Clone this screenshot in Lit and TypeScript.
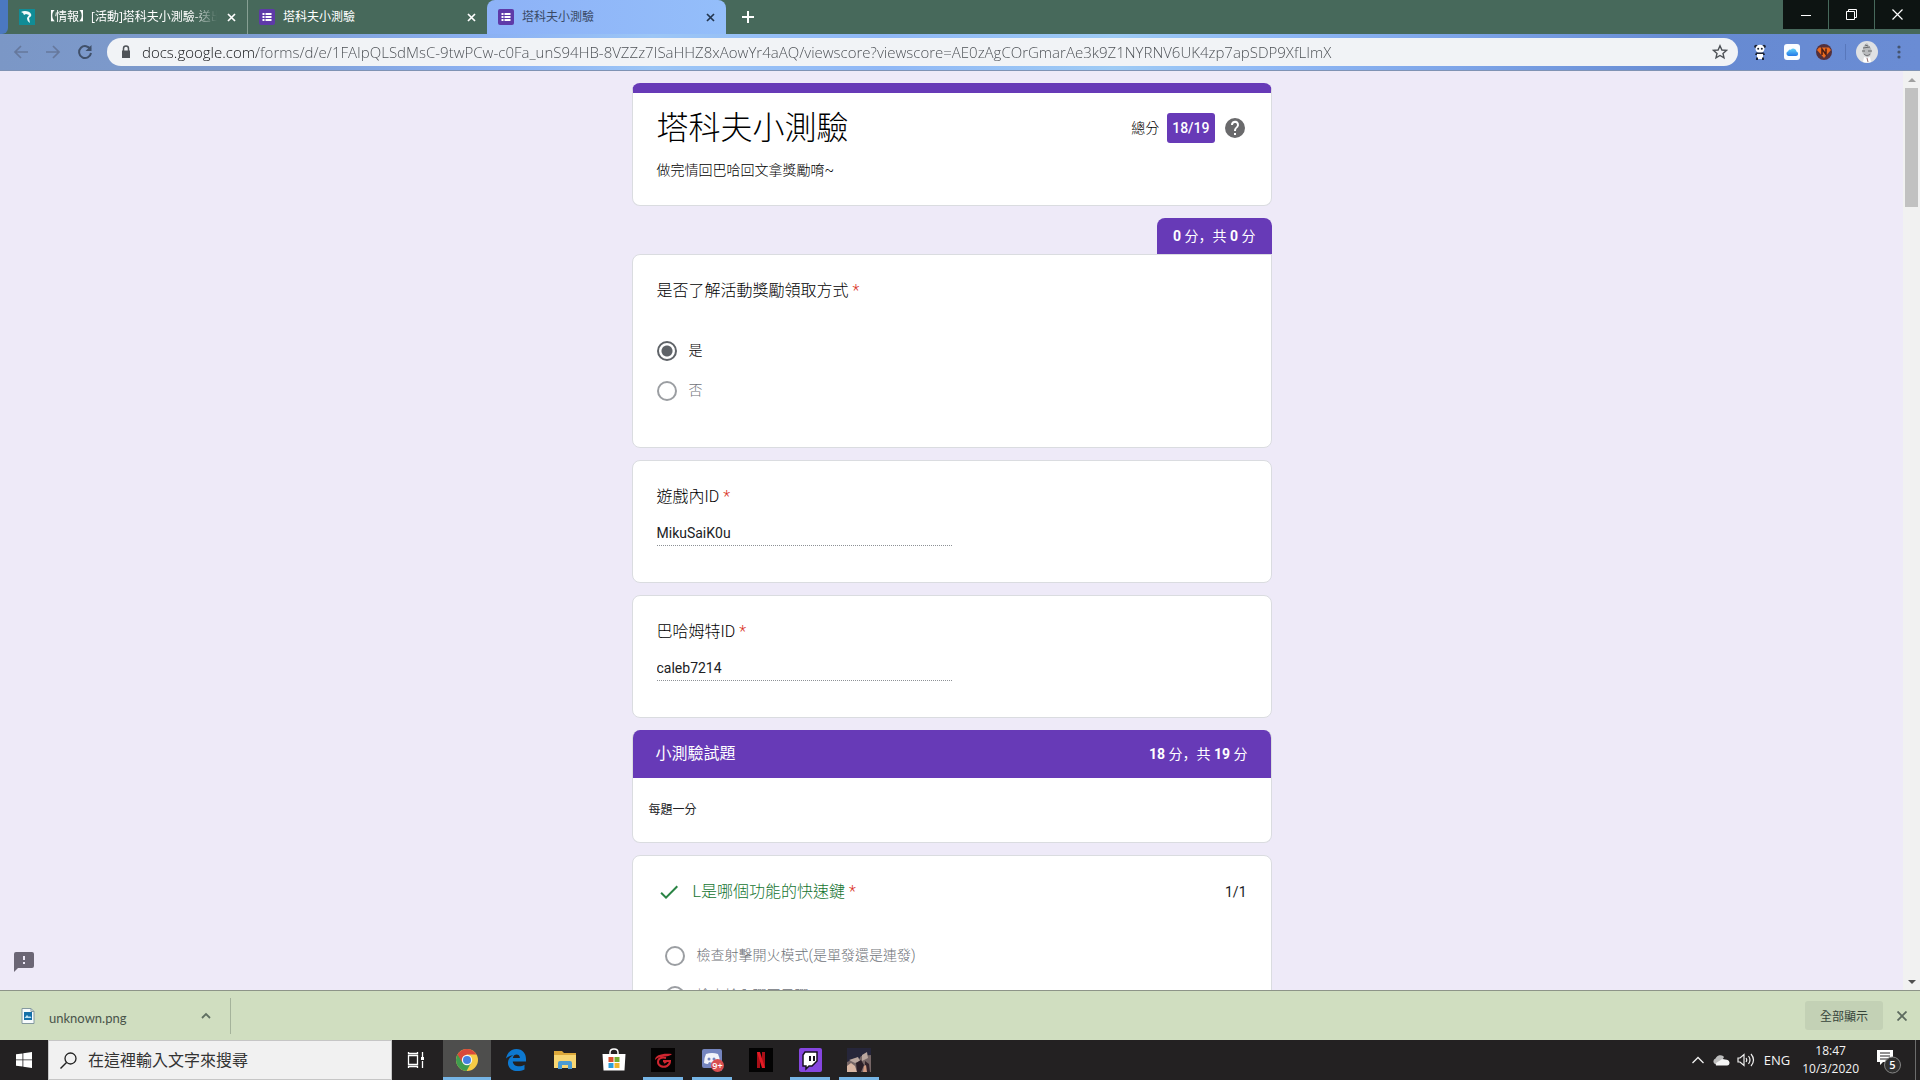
import { LitElement, html, css, svg, nothing } from "lit";
import { customElement, property } from "lit/decorators.js";
import { classMap } from "lit/directives/class-map.js";

const sans = css`"Open Sans", "Noto Sans CJK TC", sans-serif`;
const formSans = css`Roboto, "Noto Sans CJK TC", sans-serif`;

const reset = css`
  *, *::before, *::after { box-sizing: border-box; }
  button, input { font: inherit; color: inherit; border: 0; margin: 0; padding: 0; background: none; border-radius: 0; outline: none; }
  button { display: inline-flex; align-items: center; justify-content: center; flex: none; }
  svg { display: block; flex: none; }
  a { color: inherit; text-decoration: none; }
`;

const formsIcon = html`<svg width="16" height="16" viewBox="0 0 16 16">
  <rect width="16" height="16" rx="2" fill="#5e3aa8" />
  <path d="M3.5 4h2v2h-2zM6.5 4h6v2h-6zM3.5 7h2v2h-2zM6.5 7h6v2h-6zM3.5 10h2v2h-2zM6.5 10h6v2h-6z" fill="#fff" />
</svg>`;

const gamerIcon = html`<svg width="16" height="16" viewBox="0 0 16 16">
  <rect width="16" height="16" fill="#118c96" />
  <path d="M2 3c3-2 9-1 10 2 1 2-1 3-2 4l1 5c-2-1-3-3-3-5l2-3-3-1-2 1-1-2z" fill="#f2fbfb" />
</svg>`;

/* ---------- Browser tab strip and address bar ---------- */

@customElement("browser-chrome")
class BrowserChrome extends LitElement {
  static styles = [reset, css`
    :host { display: block; flex: none; font-family: ${sans}; }
    .strip { display: flex; height: 34px; background: #47695b; color: #fff; }
    .edge { width: 8px; background: #4b78c0; border-bottom-right-radius: 6px; flex: none; }
    .tabs { display: flex; flex: 0 1 718px; min-width: 0; }
    .tab { display: flex; align-items: center; flex: 1 1 0; min-width: 0; padding: 4px 10px 4px 11px; gap: 8px; height: 34px; }
    .tab.lined { border-right: 1px solid #87a094; }
    .tab.active { background: linear-gradient(90deg, #8db2f7, #94befa); color: #3a4a66; border-radius: 8px 8px 0 0; }
    .title { flex: 1; min-width: 0; font-size: 12px; line-height: 18px; white-space: nowrap; overflow: hidden; }
    .title.fade { -webkit-mask-image: linear-gradient(90deg, #000 85%, transparent); mask-image: linear-gradient(90deg, #000 85%, transparent); }
    .tab.active .close { color: #23364f; }
    .close { width: 12px; height: 16px; }
    .plus { width: 44px; height: 34px; }
    .fill { flex: 1; }
    .window { display: flex; gap: 1px; height: 29px; flex: none; }
    .window button { width: 45px; background: #0d1412; }
    .bar { display: flex; align-items: center; height: 37px; padding: 0 10px 0 5px; border-bottom: 1px solid #7f93b4;
      background: linear-gradient(90deg, #7b97c6 0, #7d9bd0 12%, #8cb2f4 26%, #9cc6f6 34%, #8fb7f6 46%, #9ecbf5 58%, #8fb8f5 66%, #7da4e8 76%, #668ad2 88%, #6a8cd4 100%); }
    .nav { width: 32px; height: 32px; color: #66789c; }
    .nav.on { color: #40506a; }
    .field { display: flex; align-items: center; flex: 1; min-width: 0; height: 28px; margin: 0 14px 0 6px; padding: 0 10px 0 12px; border-radius: 14px; background: #f1f3f6; }
    .url { flex: 1; min-width: 0; margin: 0 9px; height: 24px; font-size: 15px; font-weight: 300; color: transparent;
      background: linear-gradient(90deg, #101114 115px, #484c51 115px); -webkit-background-clip: text; background-clip: text; }
    .tools { display: flex; align-items: center; gap: 16px; }
    .account { display: flex; align-items: center; gap: 10px; }
    .rule { width: 1px; height: 16px; margin-left: 13px; background: #5877bb; }
  `];

  closeIcon() {
    return html`<svg width="9" height="9" viewBox="0 0 9 9"><path d="M1 1l7 7M8 1l-7 7" stroke="currentColor" stroke-width="1.7" /></svg>`;
  }

  render() {
    return html`
      <div class="strip">
        <div class="edge"></div>
        <div class="tabs">
          <div class="tab lined">${gamerIcon}<span class="title fade">【情報】[活動]塔科夫小測驗-送出</span>
            <button class="close" aria-label="關閉">${this.closeIcon()}</button></div>
          <div class="tab">${formsIcon}<span class="title">塔科夫小測驗</span>
            <button class="close" aria-label="關閉">${this.closeIcon()}</button></div>
          <div class="tab active">${formsIcon}<span class="title">塔科夫小測驗</span>
            <button class="close" aria-label="關閉">${this.closeIcon()}</button></div>
        </div>
        <button class="plus" aria-label="新分頁"><svg width="12" height="12" viewBox="0 0 12 12"><path d="M6 0v12M0 6h12" stroke="#fff" stroke-width="2" /></svg></button>
        <div class="fill"></div>
        <div class="window">
          <button aria-label="最小化"><svg width="10" height="10" viewBox="0 0 10 10"><path d="M0 5.5h10" stroke="#fff" /></svg></button>
          <button aria-label="還原"><svg width="11" height="11" viewBox="0 0 11 11"><path d="M.5 2.500h8v8h-8zM2.500 2.500v-2h8v8h-2" fill="none" stroke="#fff" /></svg></button>
          <button aria-label="關閉視窗"><svg width="11" height="11" viewBox="0 0 11 11"><path d="M.5.5l10 10M10.500.5l-10 10" stroke="#fff" stroke-width="1.200" /></svg></button>
        </div>
      </div>
      <div class="bar">
        <button class="nav" aria-label="上一頁"><svg width="16" height="16" viewBox="0 0 16 16"><path d="M15 8H2M8 2L2 8l6 6" fill="none" stroke="currentColor" stroke-width="1.700" /></svg></button>
        <button class="nav" aria-label="下一頁"><svg width="16" height="16" viewBox="0 0 16 16"><path d="M1 8h13M8 2l6 6-6 6" fill="none" stroke="currentColor" stroke-width="1.700" /></svg></button>
        <button class="nav on" aria-label="重新載入"><svg width="16" height="16" viewBox="0 0 16 16"><path d="M13.500 5.500A6 6 0 1 0 14 9" fill="none" stroke="currentColor" stroke-width="2" /><path d="M14.500 1v6h-6z" fill="currentColor" /></svg></button>
        <div class="field">
          <svg width="14" height="14" viewBox="0 0 14 14"><path d="M3 5.500h8V13H3z" fill="#4f5358" /><path d="M4.500 6V3.500a2.500 2.500 0 0 1 5 0V6" fill="none" stroke="#4f5358" stroke-width="1.500" /></svg>
          <input class="url" type="text" aria-label="網址" value="docs.google.com/forms/d/e/1FAIpQLSdMsC-9twPCw-c0Fa_unS94HB-8VZZz7ISaHHZ8xAowYr4aAQ/viewscore?viewscore=AE0zAgCOrGmarAe3k9Z1NYRNV6UK4zp7apSDP9XfLImX" />
          <svg width="16" height="16" viewBox="0 0 16 16"><path d="M8 1.800l1.900 4.200 4.500.4-3.400 3 1 4.500L8 11.500l-4 2.400 1-4.500-3.400-3 4.500-.4z" fill="none" stroke="#4d5156" stroke-width="1.400" /></svg>
        </div>
        <div class="tools">
          <svg width="16" height="16" viewBox="0 0 16 16"><circle cx="4" cy="2.500" r="1.800" fill="#1c2333" /><circle cx="12" cy="2.500" r="1.800" fill="#1c2333" /><ellipse cx="8" cy="4.800" rx="4.500" ry="4" fill="#fff" /><circle cx="6.200" cy="4.800" r="1" fill="#1c2333" /><circle cx="9.800" cy="4.800" r="1" fill="#1c2333" /><path d="M4 8.500h8l1 2.500H3z" fill="#1c2333" /><path d="M5 10h6v5H5z" fill="#fff" /><path d="M4 13.500h2V16H4zM10 13.500h2V16h-2z" fill="#1c2333" /></svg>
          <svg width="16" height="16" viewBox="0 0 16 16"><defs><linearGradient id="cloud" x2="0" y2="1"><stop stop-color="#5fd0fa" /><stop offset="1" stop-color="#2478e6" /></linearGradient></defs><rect width="16" height="16" rx="3" fill="#fbfdff" /><path d="M4.500 12a2.400 2.400 0 0 1-.3-4.700 2 2 0 0 1 2.600-1.500 3.200 3.200 0 0 1 5.700 1.700A2.300 2.300 0 0 1 12 12z" fill="url(#cloud)" /></svg>
          <svg width="16" height="16" viewBox="0 0 16 16"><circle cx="8" cy="8" r="8" fill="#53303c" /><path d="M3 3.500h10L15 6l-7 8-7-8z" fill="#ec6a1e" /><path d="M6 11V5l4 5.500V4.500" fill="none" stroke="#4b1d14" stroke-width="1.500" /></svg>
        </div>
        <div class="account">
          <div class="rule"></div>
          <svg width="22" height="22" viewBox="0 0 22 22"><circle cx="11" cy="11" r="11" fill="#dfe1e3" /><path d="M7 8c0-3 2-5 4-6l3 4c2 2 2 6 0 9l-3 1-3-2c-2-2-2-4-1-6z" fill="#b9bbbd" /><path d="M7 7l7-1M6 10h3m3 0h4M8 13c2 2 4 2 6 0M9 4l3 1" stroke="#686a6d" fill="none" /><path d="M8 16l3 1 3-1 1 5q-4 1-8 0z" fill="#fff" /><path d="M11 17l1 4" stroke="#966f6f" /></svg>
          <svg width="22" height="16" viewBox="0 0 22 16"><circle cx="11" cy="3" r="1.600" fill="#45546f" /><circle cx="11" cy="8" r="1.600" fill="#45546f" /><circle cx="11" cy="13" r="1.600" fill="#45546f" /></svg>
        </div>
      </div>`;
  }
}

/* ---------- Quiz form ---------- */

interface Choice { text: string; checked?: boolean; }

@customElement("form-question")
class FormQuestion extends LitElement {
  @property() heading = "";
  @property() name = "";
  @property() score = "";
  @property() answer = "";
  @property({ type: Boolean }) correct = false;
  @property({ type: Boolean }) tagged = false;
  @property({ attribute: false }) choices: Choice[] = [];

  static styles = [reset, css`
    :host { display: block; font-family: ${formSans}; color: #202124; }
    .card { border: 1px solid #dadce0; border-radius: 8px; background: #fff; padding: 24px 24px 36px; }
    .card.tagged { border-top-right-radius: 0; padding-bottom: 36px; }
    .head { display: flex; align-items: center; font-size: 16px; line-height: 24px; }
    .label { font-weight: 300; color: #000; }
    .correct .label { color: #14732f; }
    .star { color: #d93025; margin-left: 4px; font-weight: 300; }
    .check { margin: 0 12px 0 0; }
    .score { margin-left: auto; font-size: 14px; }
    .group { border: 0; margin: 28px 0 0; padding: 0; }
    .correct .group { margin: 32px 0 0 8px; }
    .row { display: flex; align-items: center; gap: 12px; height: 40px; font-size: 14px; line-height: 20px; color: #6f7379; }
    .row span { padding-bottom: 2px; font-weight: 300; }
    .row.on { color: #000; }
    .radio { appearance: none; width: 20px; height: 20px; border: 2px solid #9b9ea2; border-radius: 50%; }
    .radio:checked { border-color: #5f6368; background: radial-gradient(circle, #5f6368 5px, transparent 6px); }
    .text { display: block; width: 50%; height: 23px; padding-bottom: 2px; margin-top: 14px; border-bottom: 1px dotted #8d9196; font-size: 14px; line-height: 20px; }
  `];

  render() {
    return html`<div class=${classMap({ card: true, tagged: this.tagged, correct: this.correct })}>
      <div class="head">
        ${this.correct ? html`<svg class="check" width="24" height="24" viewBox="0 0 24 24"><path d="M9 16.200L4.800 12l-1.400 1.400L9 19 21 7l-1.400-1.400z" fill="#2a8445" /></svg>` : nothing}
        <label class="label" id="title" for="text">${this.heading}</label><span class="star">*</span>
        ${this.score ? html`<span class="score">${this.score}</span>` : nothing}
      </div>
      ${this.choices.length
        ? html`<div class="group" role="radiogroup" aria-labelledby="title">${this.choices.map((c) => html`
            <label class=${classMap({ row: true, on: !!c.checked })}>
              <input class="radio" type="radio" name=${this.name} .checked=${!!c.checked} /><span>${c.text}</span>
            </label>`)}</div>`
        : html`<input class="text" id="text" type="text" .value=${this.answer} />`}
    </div>`;
  }
}

@customElement("quiz-form")
class QuizForm extends LitElement {
  static styles = [reset, css`
    :host { display: flex; flex: 1; min-height: 0; background: #eeeaf8; font-family: ${formSans}; color: #202124; }
    .view { position: relative; flex: 1; min-width: 0; overflow: hidden; }
    .column { display: flex; flex-direction: column; gap: 12px; max-width: 640px; margin: 0 auto; padding-top: 12px; }
    .intro { border: 1px solid #dadce0; border-top: 10px solid #673ab7; border-radius: 8px; background: #fff; padding: 13px 24px 25px; }
    .top { display: flex; align-items: center; height: 44px; }
    .name { flex: 1; margin: 0; font-size: 32px; line-height: 44px; font-weight: 300; color: #000; }
    .total { font-size: 14px; margin-right: 8px; padding-bottom: 2px; font-weight: 300; color: #000; }
    .badge { background: #673ab7; color: #fff; font-size: 14px; font-weight: 500; line-height: 30px; padding: 0 5px; border-radius: 3px; }
    .help { width: 24px; height: 24px; margin: 0 0 0 8px; }
    .about { margin: 10px 0 0; font-size: 14px; line-height: 20px; font-weight: 300; color: #000; }
    .points { font-family: Roboto, "Noto Sans CJK SC", sans-serif; font-size: 14px; font-weight: 400; }
    .points b { font-weight: 700; }
    .tag { display: block; width: fit-content; margin-left: auto; background: #673ab7; color: #fff; border-radius: 8px 8px 0 0; padding: 0 16px; line-height: 36px; }
    .section { border-radius: 8px; overflow: hidden; border: 1px solid #dadce0; border-top: 0; background: #fff; }
    .banner { display: flex; justify-content: space-between; align-items: center; margin: 0 -1px; padding: 0 24px; background: #673ab7; color: #fff; line-height: 48px; }
    .banner h2 { margin: 0; font-size: 16px; font-weight: 400; }
    .note { margin: 0; padding: 22px 16px; font-size: 12px; line-height: 20px; }
    .feedback { position: absolute; left: 12px; bottom: 16px; width: 24px; height: 24px; }
    .scroll { display: flex; flex-direction: column; align-items: center; width: 17px; flex: none; background: #f1f1f1; }
    .scroll button { width: 17px; height: 17px; }
    .thumb { width: 13px; height: 13%; background: #c1c1c1; }
    .track { flex: 1; }
  `];

  render() {
    return html`
      <main class="view">
        <div class="column">
          <section class="intro">
            <div class="top">
              <h1 class="name">塔科夫小測驗</h1>
              <span class="total">總分</span><span class="badge">18/19</span>
              <button class="help" aria-label="說明"><svg width="24" height="24" viewBox="0 0 24 24"><path d="M12 2a10 10 0 1 0 0 20 10 10 0 0 0 0-20zm1 17h-2v-2h2zm2.100-7.800-.9.900C13.400 12.900 13 13.500 13 15h-2v-.5c0-1.100.4-2.100 1.200-2.800l1.200-1.300A2 2 0 1 0 10 9H8a4 4 0 1 1 7.100 2.200z" fill="#6a6a6c" /></svg></button>
            </div>
            <p class="about">做完情回巴哈回文拿獎勵唷~</p>
          </section>
          <div>
            <span class="tag points"><b>0</b> 分，共 <b>0</b> 分</span>
            <form-question tagged name="rule" heading="是否了解活動獎勵領取方式" .choices=${[{ text: "是", checked: true }, { text: "否" }]}></form-question>
          </div>
          <form-question heading="遊戲內ID" answer="MikuSaiK0u"></form-question>
          <form-question heading="巴哈姆特ID" answer="caleb7214"></form-question>
          <section class="section">
            <div class="banner"><h2>小測驗試題</h2><span class="points"><b>18</b> 分，共 <b>19</b> 分</span></div>
            <p class="note">每題一分</p>
          </section>
          <form-question correct name="hotkey" score="1/1" heading="L是哪個功能的快速鍵"
            .choices=${[{ text: "檢查射擊開火模式(是單發還是連發)" }, { text: "檢查槍內彈匣子彈" }]}></form-question>
        </div>
        <button class="feedback" aria-label="回報問題"><svg width="24" height="24" viewBox="0 0 24 24"><path d="M20 2H4a2 2 0 0 0-2 2v18l4-4h14a2 2 0 0 0 2-2V4a2 2 0 0 0-2-2zm-7 12h-2v-2h2zm0-4h-2V6h2z" fill="#6b6675" /></svg></button>
      </main>
      <div class="scroll">
        <button aria-label="向上捲動"><svg width="8" height="4" viewBox="0 0 8 4"><path d="M0 4l4-4 4 4z" fill="#a0a0a0" /></svg></button>
        <div class="thumb"></div><div class="track"></div>
        <button aria-label="向下捲動"><svg width="8" height="4" viewBox="0 0 8 4"><path d="M0 0l4 4 4-4z" fill="#505050" /></svg></button>
      </div>`;
  }
}

/* ---------- Download shelf ---------- */

@customElement("download-shelf")
class DownloadShelf extends LitElement {
  static styles = [reset, css`
    :host { display: flex; align-items: center; flex: none; height: 49px; background: #d0dec0; border-top: 1px solid #8d9488; font-family: ${sans}; font-size: 13px; color: #49544a; padding-right: 8px; }
    .item { display: flex; align-items: center; width: 231px; height: 36px; padding: 0 16px 0 20px; border-right: 1px solid #a5b39b; }
    .file { flex: 1; margin-left: 13px; padding-top: 4px; font-family: Lato, ${sans}; font-size: 13px; line-height: 18px; }
    .fill { flex: 1; }
    .all { height: 29px; padding: 0 15px; border-radius: 3px; background: #c3d1b5; font-size: 12px; color: #36443a; }
    .close { width: 20px; height: 24px; margin-left: 9px; }
    .menu { width: 16px; height: 24px; }
  `];

  render() {
    return html`
      <div class="item">
        <svg width="16" height="18" viewBox="0 0 16 18"><path d="M2 1.500h9l3 3v12H2z" fill="#f7fbfd" stroke="#84999f" /><path d="M4 5h8v8H4z" fill="#146fa8" /><path d="M4.500 11l2.500-3 2 2 1-1 1.500 2z" fill="#bfe2f4" /><path d="M11 1.500v3h3" fill="none" stroke="#84999f" /></svg>
        <a class="file" href="#">unknown.png</a>
        <button class="menu" aria-label="更多選項"><svg width="10" height="7" viewBox="0 0 10 7"><path d="M1 6l4-4 4 4" fill="none" stroke="#5f6f61" stroke-width="1.800" /></svg></button>
      </div>
      <div class="fill"></div>
      <button class="all">全部顯示</button>
      <button class="close" aria-label="關閉"><svg width="10" height="10" viewBox="0 0 10 10"><path d="M.5.5l9 9M9.500.5l-9 9" stroke="#5d6a5f" stroke-width="1.800" /></svg></button>`;
  }
}

/* ---------- Desktop taskbar ---------- */

interface TaskApp { label: string; state?: string; art: unknown; }

const apps: TaskApp[] = [
  { label: "工作檢視", art: svg`<path d="M2.500 7.500h9v9h-9zM2.500 4v1.500h9V4M2.500 20v-1.500h9V20M16.500 4v5M16.500 13v7" fill="none" stroke="#fff" stroke-width="1.300"/><path d="M15 9h3v3h-3z" fill="#fff"/>` },
  { label: "Chrome", state: "active", art: svg`<circle cx="12" cy="12" r="11" fill="#f7cb45"/><path d="M2.500 6.500A11 11 0 0 0 11.500 23l4.800-8.500L12 12z" fill="#3f9c4f"/><path d="M2.500 6.500A11 11 0 0 1 21.500 6.500H12L7 14z" fill="#d9483b"/><circle cx="12" cy="12" r="5.200" fill="#f4f6f8"/><circle cx="12" cy="12" r="4" fill="#4480e2"/>` },
  { label: "Edge", art: svg`<path d="M2 10.500C3.300 4 8 1 12.500 1 18.500 1 22 5.500 22 11v2.500H8.800c.3 5 7.200 6.200 11.700 3.300v4.700C12 25.500 3.500 21.500 4 14.500c.2-3.600 2.300-5.900 5.200-7.200C6.500 7.500 4 8.500 2 10.500zM8.900 9.900h7c0-4.600-6.500-4.600-7 0z" fill="#0d78d0"/>` },
  { label: "檔案總管", art: svg`<path d="M1 3h8l2 2h12v15H1z" fill="#dca83a"/><path d="M1 7h22v13H1z" fill="#f7d673"/><path d="M5 21v-6q0-2 2-2h10q2 0 2 2v6h-4v-4H9v4z" fill="#4a9bd3"/>` },
  { label: "Microsoft Store", art: svg`<path d="M8 7V4.500q0-3.500 4-3.500t4 3.500V7" fill="none" stroke="#fff" stroke-width="1.500"/><path d="M.5 6h23l-1 16.500h-21z" fill="#fff"/><path d="M6.500 9h5v5h-5z" fill="#d9502f"/><path d="M12.500 9h5v5h-5z" fill="#75ad2f"/><path d="M6.500 15h5v5h-5z" fill="#2c9fdb"/><path d="M12.500 15h5v5h-5z" fill="#f2b52b"/>` },
  { label: "Garena", state: "open", art: svg`<path d="M0 0h24v24H0z" fill="#050303"/><path d="M21 6c-3 3-7 2-10 3-3 0-5 1-7 3 0-5 7-7 17-6z" fill="#cf2630"/><path d="M15 10c-4-1-8 0-8 4s5 6 9 4c2-1 3-3 3-5h-7" fill="none" stroke="#cf2630" stroke-width="2"/><path d="M13 15l3-2" stroke="#cf2630" stroke-width="2"/>` },
  { label: "Discord", state: "open", art: svg`<path d="M4 1h16q2 0 2 2v20l-4-3H4q-2 0-2-2V3q0-2 2-2z" fill="#7585bf"/><path d="M6 6q6-2 12 0 2 4 2 9-2 1-4 1l-1-2q-3 1-6 0l-1 2q-2 0-4-1 0-5 2-9z" fill="#f3f4fa"/><circle cx="9" cy="11" r="1.500" fill="#7585bf"/><circle cx="14" cy="11" r="1.500" fill="#7585bf"/><circle cx="17.500" cy="17.500" r="6.500" fill="#d94f51"/><text x="17.500" y="21" text-anchor="middle" font-family="Open Sans, sans-serif" font-size="9" font-weight="600" fill="#fff">9+</text>` },
  { label: "Netflix", art: svg`<path d="M0 0h24v24H0z" fill="#030303"/><path d="M8 4h3v16H8zM13 4h3v16h-3z" fill="#a80f17"/><path d="M8 4h3l5 16h-3z" fill="#e21b25"/>` },
  { label: "Twitch", state: "open", art: svg`<rect x="1" y="0" width="23" height="24" rx="2" fill="#8646e0"/><path d="M7 4h12v9l-5 5h-3l-3 3v-3H5V7z" fill="#fff" stroke="#17111f" stroke-width="1.500"/><path d="M11 8h2v5h-2zM15 8h2v5h-2z" fill="#17111f"/>` },
  { label: "遊戲", state: "open", art: svg`<path d="M0 0h24v24H0z" fill="#26263a"/><path d="M0 14l7-3 4 2 3-5 10-1v17H0z" fill="#766666"/><path d="M2 12l9-3 2 4-5 2zM15 7l5-3 1 6-6 3z" fill="#b9a69e"/><path d="M0 18l4-3 4 3 2 6H0z" fill="#d8b6a3"/><path d="M9 15l5-3 3 5-3 7h-4z" fill="#2b1f28"/><path d="M18 13l4 3 1 8h-5z" fill="#33242c"/><path d="M17 18l2-1 1 7h-4z" fill="#d39c83"/>` },
];

@customElement("task-bar")
class TaskBar extends LitElement {
  static styles = [reset, css`
    :host { display: flex; flex: none; height: 40px; background: #232122; color: #f3f3f3; font-family: ${sans}; }
    .start { width: 48px; height: 40px; }
    .search { display: flex; align-items: center; flex: 0 1 344px; gap: 11px; padding: 0 11px; background: #f1f1f1; border: 1px solid #c6c6c6; margin-right: 2px; }
    .query { flex: 1; min-width: 0; height: 32px; font-size: 16px; color: #333; }
    .query::placeholder { color: #333; opacity: 1; }
    .apps { display: flex; gap: 1px; }
    .app { width: 48px; height: 40px; }
    .app.active { background: #4e4e4d; border-top: 3px solid #4e4e4d; border-bottom: 3px solid #76b5e6; }
    .app.open { width: 40px; margin: 0 4px; border-top: 3px solid transparent; border-bottom: 3px solid #76b5e6; }
    .fill { flex: 1; }
    .tray { display: flex; align-items: center; gap: 7px; font-size: 13px; }
    .lang { margin: 0 0 0 2px; }
    .clock { display: flex; flex-direction: column; align-items: center; justify-content: center; font-size: 12px; line-height: 18px; margin-left: 5px; }
    .notes { width: 38px; height: 40px; margin-left: 4px; }
    .desktop { width: 5px; height: 40px; border-left: 1px solid #6c6c6c; }
  `];

  render() {
    return html`
      <button class="start" aria-label="開始"><svg width="16" height="16" viewBox="0 0 16 16"><path d="M0 2.300L6.500 1.400v6H0zM7.300 1.300L16 0v7.400H7.300zM0 8.200h6.500v6.400L0 13.700zM7.300 8.200H16V16l-8.700-1.300z" fill="#fff" /></svg></button>
      <div class="search">
        <svg width="17" height="17" viewBox="0 0 17 17"><circle cx="10.500" cy="6.500" r="5.500" fill="none" stroke="#222" stroke-width="1.300" /><path d="M6.500 10.500L.5 16.500" stroke="#222" stroke-width="1.400" /></svg>
        <input class="query" type="text" aria-label="搜尋" placeholder="在這裡輸入文字來搜尋" />
      </div>
      <div class="apps">${apps.map((a) => html`
        <button class=${classMap({ app: true, active: a.state === "active", open: a.state === "open" })} aria-label=${a.label}>
          <svg width="24" height="24" viewBox="0 0 24 24">${a.art}</svg>
        </button>`)}</div>
      <div class="fill"></div>
      <div class="tray">
        <svg width="14" height="8" viewBox="0 0 14 8"><path d="M1.500 7L7 1.500 12.500 7" fill="none" stroke="#f0f0f0" stroke-width="1.300" /></svg>
        <svg width="18" height="12" viewBox="0 0 18 12"><path d="M3 10a3 3 0 0 1 .5-5.500A5 5 0 0 1 12 3l-4 7z" fill="#bdbdbd" /><path d="M4 11.500q-1-2 1.500-3.500L8 6.500q2-2.500 5-1 4 0 4.500 3 0 3-2.500 3z" fill="#f5f5f5" /></svg>
        <svg width="18" height="14" viewBox="0 0 18 14"><path d="M1 5h2l4-3.500v11L3 9H1zM9 5q1.500 2 0 4M11.500 3q3 4 0 8M14 1q5 6 0 12" fill="none" stroke="#f0f0f0" stroke-width="1.200" /></svg>
        <span class="lang">ENG</span>
        <div class="clock"><span>18:47</span><span>10/3/2020</span></div>
        <button class="notes" aria-label="通知"><svg width="26" height="28" viewBox="0 0 26 28"><path d="M1 4h16v12H7l-3 3v-3H1z" fill="#fff" /><path d="M4 7h10M4 10h10M4 13h10" stroke="#232122" /><circle cx="16.500" cy="19" r="8" fill="#303030" stroke="#858585" /><text x="16.500" y="23" text-anchor="middle" font-family="Open Sans, sans-serif" font-size="11" font-weight="600" fill="#fff">5</text></svg></button>
        <div class="desktop"></div>
      </div>`;
  }
}

@customElement("app-root")
class AppRoot extends LitElement {
  static styles = css`
    :host { display: flex; flex-direction: column; height: 100vh; overflow: hidden; }
  `;

  render() {
    return html`<browser-chrome></browser-chrome><quiz-form></quiz-form><download-shelf></download-shelf><task-bar></task-bar>`;
  }
}
